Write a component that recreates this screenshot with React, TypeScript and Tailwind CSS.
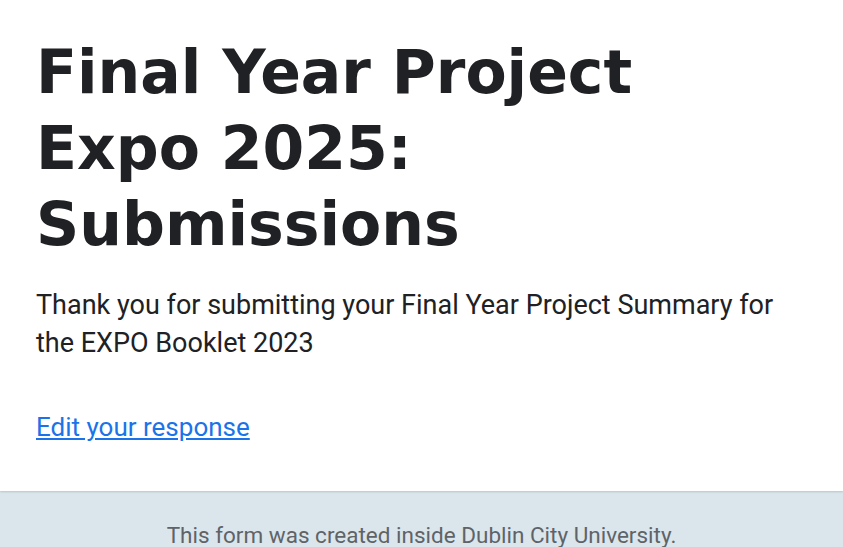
export default function App() {
  return (
    <div className="min-h-screen bg-[#dae6eb]">
      <div className="bg-white px-[36px] pt-[34px] pb-[45px] shadow-[0_1px_2px_rgba(0,0,0,0.15)]">
        <h1 className="font-['DejaVu_Sans',sans-serif] text-[60px] font-bold leading-[76px] text-[#202124]">
          Final Year Project
          <br />
          Expo 2025:
          <br />
          Submissions
        </h1>
        <p className="mt-[24px] font-['Roboto',sans-serif] text-[27px] leading-[38px] text-[#202124]">
          Thank you for submitting your Final Year Project Summary for the EXPO Booklet 2023
        </p>
        <div className="mt-[46px] font-['Roboto',sans-serif] text-[26px] leading-[38px]">
          <a href="#" className="text-[#1a73e8] underline">
            Edit your response
          </a>
        </div>
      </div>
      <div className="pt-[29px] text-center font-['Roboto',sans-serif] text-[22.5px] leading-[30px] text-[#5f6368]">
        This form was created inside Dublin City University.
      </div>
    </div>
  );
}
